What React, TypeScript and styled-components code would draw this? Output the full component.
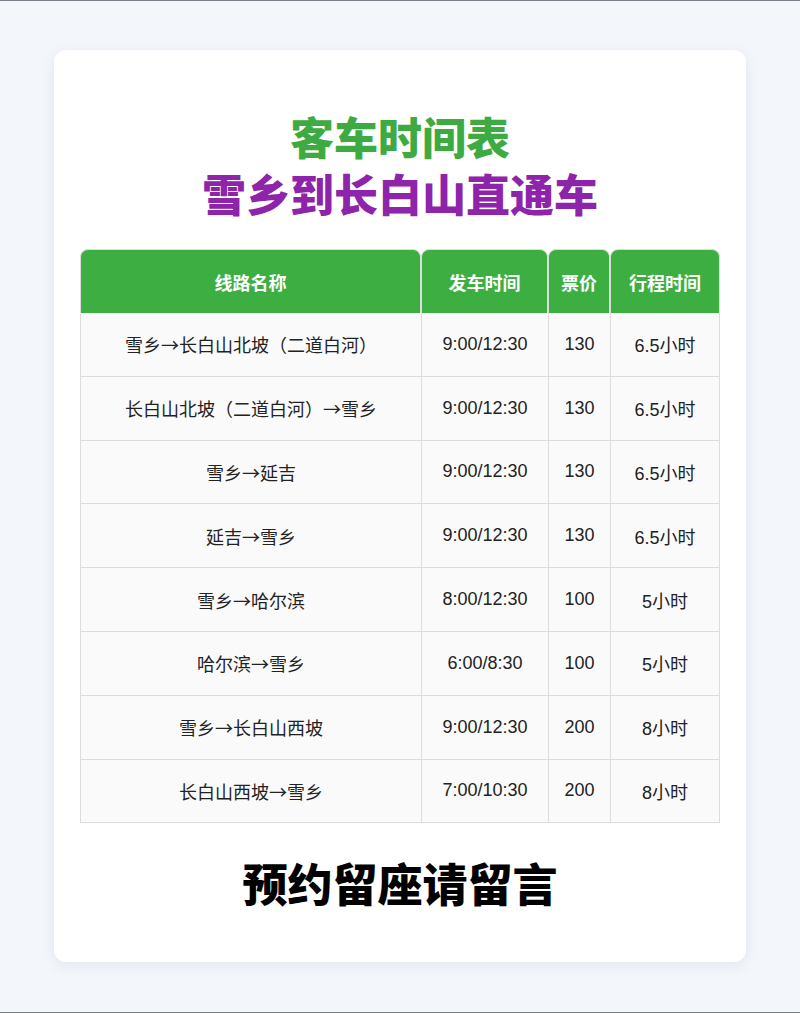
import { ReactElement } from 'react';
import styled, { createGlobalStyle } from 'styled-components';

const GlobalStyle = createGlobalStyle`
    html, body {
        margin: 0;
        padding: 0;
        background: #f3f6fb;
    }

    body {
        font-family: 'Liberation Sans', 'Noto Sans CJK SC', sans-serif;
    }
`;

const Page = styled.div`
    min-height: 1013px;
    box-sizing: border-box;
    border-top: 1px solid #7b7f8a;
    border-bottom: 1px solid #7b7f8a;
    padding: 49px 54px 50px;
`;

const Card = styled.section`
    background: #ffffff;
    border-radius: 12px;
    box-shadow: 0 4px 14px rgba(40, 60, 100, 0.08);
    padding: 58px 26px 51px;
    display: flex;
    flex-direction: column;
    align-items: stretch;
`;

const Title = styled.h1<{ $color: string }>`
    margin: 0;
    text-align: center;
    font-family: 'Noto Sans CJK SC', sans-serif;
    font-weight: 900;
    font-size: 44px;
    line-height: 57px;
    color: ${(p) => p.$color};
`;

const Table = styled.table`
    margin-top: 27px;
    width: 640px;
    border-collapse: separate;
    border-spacing: 0;
    table-layout: fixed;
`;

const HeadCell = styled.th<{ $width: number }>`
    width: ${(p) => p.$width}px;
    height: 64px;
    box-sizing: border-box;
    background: #3daf42;
    color: #ffffff;
    font-family: 'Noto Sans CJK SC', sans-serif;
    font-weight: 700;
    font-size: 18px;
    border: 1px solid #dcdcdc;
    border-bottom: none;
    border-radius: 8px 8px 0 0;
    padding: 0;
`;

const Cell = styled.td<{ $cjk?: boolean }>`
    height: 63.8px;
    box-sizing: border-box;
    background: #fafafa;
    color: #222222;
    font-family: ${(p) =>
        p.$cjk ? "'Noto Sans CJK SC', sans-serif" : "'Liberation Sans', 'Noto Sans CJK SC', sans-serif"};
    font-size: 18px;
    text-align: center;
    border-left: 1px solid #dcdcdc;
    border-bottom: 1px solid #dcdcdc;
    padding: 0;

    &:last-child {
        border-right: 1px solid #dcdcdc;
    }
`;

const Footer = styled.div`
    margin-top: 31px;
    text-align: center;
    font-family: 'Noto Sans CJK SC', sans-serif;
    font-weight: 900;
    font-size: 45px;
    line-height: 57px;
    color: #000000;
`;

interface RouteRow {
    route: string;
    departure: string;
    price: string;
    duration: string;
}

const columns = [
    { title: '线路名称', width: 341 },
    { title: '发车时间', width: 127 },
    { title: '票价', width: 62 },
    { title: '行程时间', width: 110 },
];

const rows: RouteRow[] = [
    { route: '雪乡→长白山北坡（二道白河）', departure: '9:00/12:30', price: '130', duration: '6.5小时' },
    { route: '长白山北坡（二道白河）→雪乡', departure: '9:00/12:30', price: '130', duration: '6.5小时' },
    { route: '雪乡→延吉', departure: '9:00/12:30', price: '130', duration: '6.5小时' },
    { route: '延吉→雪乡', departure: '9:00/12:30', price: '130', duration: '6.5小时' },
    { route: '雪乡→哈尔滨', departure: '8:00/12:30', price: '100', duration: '5小时' },
    { route: '哈尔滨→雪乡', departure: '6:00/8:30', price: '100', duration: '5小时' },
    { route: '雪乡→长白山西坡', departure: '9:00/12:30', price: '200', duration: '8小时' },
    { route: '长白山西坡→雪乡', departure: '7:00/10:30', price: '200', duration: '8小时' },
];

const App = (): ReactElement => {
    return (
        <>
            <GlobalStyle />
            <Page>
                <Card>
                    <Title $color="#3dab41">客车时间表</Title>
                    <Title $color="#8e24aa">雪乡到长白山直通车</Title>
                    <Table>
                        <thead>
                            <tr>
                                {columns.map((col) => (
                                    <HeadCell key={col.title} $width={col.width}>
                                        {col.title}
                                    </HeadCell>
                                ))}
                            </tr>
                        </thead>
                        <tbody>
                            {rows.map((row, index) => (
                                <tr key={`row-${index}`}>
                                    <Cell $cjk>{row.route}</Cell>
                                    <Cell>{row.departure}</Cell>
                                    <Cell>{row.price}</Cell>
                                    <Cell>{row.duration}</Cell>
                                </tr>
                            ))}
                        </tbody>
                    </Table>
                    <Footer>预约留座请留言</Footer>
                </Card>
            </Page>
        </>
    );
};

export default App;
